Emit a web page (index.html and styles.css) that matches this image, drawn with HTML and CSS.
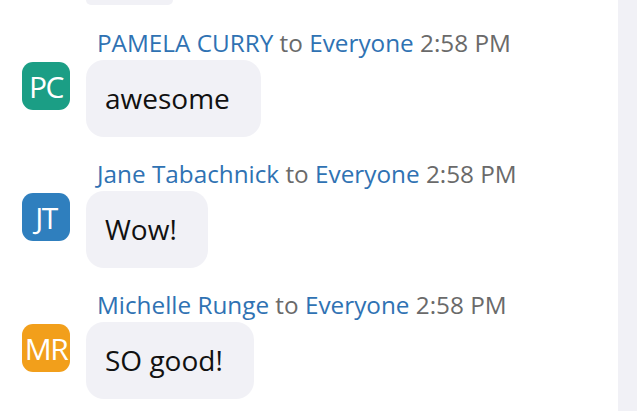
FILE: index.html
```html
<!DOCTYPE html>
<html lang="en">
<head>
<meta charset="utf-8">
<title>Chat</title>
<link rel="stylesheet" href="styles.css">
</head>
<body>
<div class="window">
  <div class="chat">
    <div class="stub-row"><div class="bubble stub"></div></div>
    <div class="msg">
      <div class="meta"><span class="name">PAMELA CURRY</span> <span class="to">to</span> <span class="name">Everyone</span> <span class="time">2:58 PM</span></div>
      <div class="avatar pc">PC</div>
      <div class="bubble">awesome</div>
    </div>
    <div class="msg">
      <div class="meta"><span class="name">Jane Tabachnick</span> <span class="to">to</span> <span class="name">Everyone</span> <span class="time">2:58 PM</span></div>
      <div class="avatar jt">JT</div>
      <div class="bubble">Wow!</div>
    </div>
    <div class="msg">
      <div class="meta"><span class="name">Michelle Runge</span> <span class="to">to</span> <span class="name">Everyone</span> <span class="time">2:58 PM</span></div>
      <div class="avatar mr">MR</div>
      <div class="bubble">SO good!</div>
    </div>
  </div>
  <div class="scrollbar"></div>
</div>
</body>
</html>
```
FILE: styles.css
```css
html, body {
  margin: 0;
  padding: 0;
  background: #ffffff;
}
body {
  font-family: "Open Sans", "Noto Sans", sans-serif;
  width: 637px;
  height: 411px;
  overflow: hidden;
}
.window {
  display: flex;
  height: 411px;
}
.chat {
  flex: 1;
  display: flex;
  flex-direction: column;
  gap: 24px;
}
.scrollbar {
  width: 19px;
  background: #f1f1f6;
}
.stub-row {
  padding-left: 86px;
  margin-bottom: 1px;
}
.bubble {
  background: #f1f1f6;
  border-radius: 18px;
  color: #111111;
  font-size: 28px;
  line-height: 37px;
  padding: 20px 31px 20px 19px;
  justify-self: start;
}
.bubble.stub {
  width: 87px;
  height: 5px;
  padding: 0;
  border-radius: 0 0 18px 18px;
}
.msg {
  display: grid;
  grid-template-columns: 48px auto;
  column-gap: 16px;
  row-gap: 4px;
  padding-left: 22px;
}
.meta {
  grid-column: 2;
  grid-row: 1;
  padding-left: 11px;
  font-size: 24.3px;
  line-height: 26px;
  white-space: nowrap;
}
.name {
  color: #2f72b3;
}
.to {
  color: #6a6a6a;
}
.time {
  color: #6a6a6a;
}
.avatar {
  grid-column: 1;
  grid-row: 2;
  width: 48px;
  height: 48px;
  margin-top: 2px;
  border-radius: 11px;
  color: #ffffff;
  font-size: 30px;
  display: flex;
  align-items: center;
  justify-content: center;
  letter-spacing: -1.5px;
}
.msg .bubble {
  grid-column: 2;
  grid-row: 2;
}
.pc { background: #1b9e85; }
.jt { background: #2f7fbe; }
.mr { background: #f29f1b; }
```
